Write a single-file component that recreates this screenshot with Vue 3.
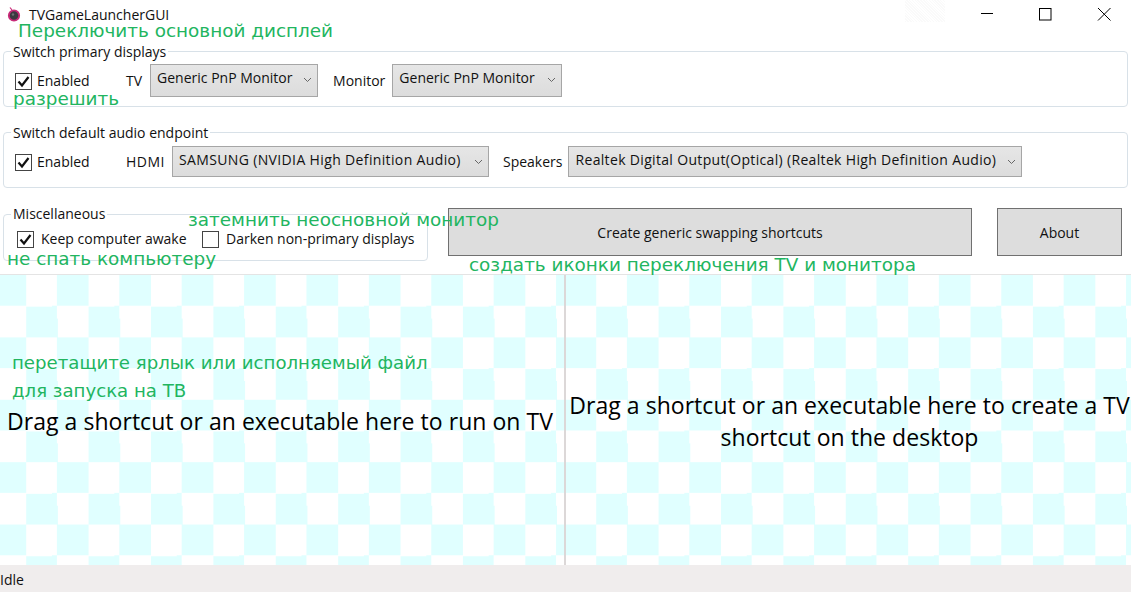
<script setup>
const groups = [
  {
    title: 'Switch primary displays',
    cls: 'g1',
    left: 'TV', leftVal: 'Generic PnP Monitor', leftCls: 'c1',
    right: 'Monitor', rightVal: 'Generic PnP Monitor', rightCls: 'c2'
  },
  {
    title: 'Switch default audio endpoint',
    cls: 'g2',
    left: 'HDMI', leftVal: 'SAMSUNG (NVIDIA High Definition Audio)', leftCls: 'c3',
    right: 'Speakers', rightVal: 'Realtek Digital Output(Optical) (Realtek High Definition Audio)', rightCls: 'c4'
  }
]
const notes = [
  { t: 'Переключить основной дисплей', c: 'n1' },
  { t: 'разрешить', c: 'n2' },
  { t: 'затемнить неосновной монитор', c: 'n3' },
  { t: 'не спать компьютеру', c: 'n4' },
  { t: 'создать иконки переключения TV и монитора', c: 'n5' },
  { t: 'перетащите ярлык или исполняемый файл', c: 'n6' },
  { t: 'для запуска на ТВ', c: 'n7' }
]
</script>

<template>
  <div class="win">
    <header class="title">
      <svg class="appicon" width="16" height="16" viewBox="0 0 16 16">
        <circle cx="8" cy="8.5" r="5.2" fill="#3c3a40" stroke="#c92a78" stroke-width="1.8" />
        <circle cx="7" cy="7.5" r="1.2" fill="#6e6e72" />
        <path d="M4 0.5l2 2.5" stroke="#c92a78" stroke-width="1.2" />
      </svg>
      <span class="apptitle">TVGameLauncherGUI</span>
      <span class="ghost"></span>
      <div class="caps">
        <svg width="46" height="30" viewBox="0 0 46 30"><path d="M16 13.5h12" stroke="#000" /></svg>
        <svg width="46" height="30" viewBox="0 0 46 30"><rect x="16.5" y="8.5" width="11.5" height="11.5" fill="none" stroke="#000" /></svg>
        <svg width="46" height="30" viewBox="0 0 46 30"><path d="M17 8l12.5 12.5M29.5 8L17 20.5" stroke="#000" /></svg>
      </div>
    </header>

    <section v-for="g in groups" :key="g.title" class="group" :class="g.cls">
      <span class="legend">{{ g.title }}</span>
      <label class="chk en"><span class="box on"><svg width="13" height="13" viewBox="0 0 13 13"><path d="M1.5 6.5l3.5 4L11.5 2" fill="none" stroke="#111" stroke-width="2.2" /></svg></span>Enabled</label>
      <span class="lab l-left">{{ g.left }}</span>
      <div class="combo" :class="g.leftCls"><span>{{ g.leftVal }}</span><svg width="9" height="6" viewBox="0 0 9 6"><path d="M1 1l3.5 3.5L8 1" fill="none" stroke="#666" /></svg></div>
      <span class="lab l-right">{{ g.right }}</span>
      <div class="combo" :class="g.rightCls"><span>{{ g.rightVal }}</span><svg width="9" height="6" viewBox="0 0 9 6"><path d="M1 1l3.5 3.5L8 1" fill="none" stroke="#666" /></svg></div>
    </section>

    <div class="miscrow">
      <section class="group g3">
        <span class="legend">Miscellaneous</span>
        <label class="chk"><span class="box on"><svg width="13" height="13" viewBox="0 0 13 13"><path d="M1.5 6.5l3.5 4L11.5 2" fill="none" stroke="#111" stroke-width="2.2" /></svg></span>Keep computer awake</label>
        <label class="chk"><span class="box"></span>Darken non-primary displays</label>
      </section>
      <button class="btn create">Create generic swapping shortcuts</button>
      <button class="btn about">About</button>
    </div>

    <div class="drops">
      <div class="drop dl"><p>Drag a shortcut or an executable here to run on TV</p></div>
      <div class="split"></div>
      <div class="drop dr"><p>Drag a shortcut or an executable here to create a TV shortcut on the desktop</p></div>
    </div>

    <footer class="status">Idle</footer>

    <span v-for="n in notes" :key="n.c" class="note" :class="n.c">{{ n.t }}</span>
  </div>
</template>

<style>
html, body { margin: 0; background: #fff; overflow: hidden; }
</style>

<style scoped>
.win {
  position: relative;
  width: 1131px;
  height: 592px;
  background: #fff;
  display: flex;
  flex-direction: column;
  font-family: "Open Sans", "Noto Sans", sans-serif;
  font-size: 14px;
  color: #111;
  overflow: hidden;
}
.title {
  height: 30px;
  display: flex;
  align-items: flex-start;
  flex: none;
}
.appicon { margin: 7px 0 0 6px; }
.apptitle { margin: 7px 0 0 7px; font-size: 14px; line-height: 16px; }
.ghost {
  position: absolute;
  left: 905px;
  top: 0;
  width: 40px;
  height: 22px;
  background: repeating-linear-gradient(45deg, #fafafa 0 1px, #fff 1px 2px);
}
.caps { margin-left: auto; margin-right: 4px; display: flex; height: 30px; }
.caps svg { display: block; margin-left: 12px; }

.group {
  position: relative;
  border: 1px solid #d8e1e8;
  border-radius: 4px;
  box-sizing: border-box;
  flex: none;
}
.g1 { margin: 21px 3px 0 3px; height: 56px; }
.g2 { margin: 25px 3px 0 3px; height: 56px; }
.g1, .g2 { display: flex; align-items: flex-start; }
.g3 { width: 425px; height: 47px; margin: 26px 0 0 3px; display: flex; align-items: flex-start; }
.legend {
  position: absolute;
  left: 7px;
  top: -9px;
  padding: 0 2px;
  background: #fff;
  line-height: 18px;
}
.g3 .legend { top: -10px; }
.chk { display: flex; align-items: center; line-height: 18px; white-space: nowrap; }
.box {
  box-sizing: border-box;
  width: 17px;
  height: 17px;
  border: 1px solid #444;
  background: #fff;
  display: flex;
  align-items: center;
  justify-content: center;
  margin-right: 5px;
  flex: none;
}
.g1 .en, .g2 .en { margin: 20px 0 0 11px; width: 111px; }
.g3 .chk { margin-top: 15px; }
.g3 .box { margin-right: 7px; }
.g3 .chk:nth-of-type(1) { margin-left: 13px; width: 185px; }
.lab { line-height: 18px; margin-top: 20px; white-space: nowrap; }
.g2 .l-left { letter-spacing: 0.5px; }
.combo {
  box-sizing: border-box;
  height: 33px;
  margin-top: 12px;
  background: linear-gradient(#e6e6e6, #dcdcdc);
  border: 1px solid #a6a6a6;
  display: flex;
  align-items: flex-start;
  justify-content: space-between;
  padding: 4px 5px 0 6px;
  line-height: 18px;
  white-space: nowrap;
}
.combo svg { margin-top: 8px; flex: none; }
.c1 { width: 168px; margin-left: 8px; }
.c2 { width: 170px; margin-left: 7px; }
.c3, .c4 { height: 31px; margin-top: 13px; letter-spacing: 0.36px; }
.c3 { width: 317px; margin-left: 7px; }
.c4 { width: 454px; margin-left: 6px; letter-spacing: 0.33px; }
.l-right { margin-left: 15px; }
.g2 .l-right { margin-left: 14px; }

.miscrow { display: flex; align-items: flex-start; height: 86px; flex: none; }
.btn {
  box-sizing: border-box;
  background: #dddddd;
  border: 1px solid #707070;
  font: inherit;
  color: #111;
  height: 48px;
  margin-top: 20px;
  padding: 0;
}
.create { width: 524px; margin-left: 20px; }
.about { width: 125px; margin-left: 25px; }

.drops {
  display: flex;
  height: 291px;
  flex: none;
  border-top: 1px solid #e4e4e4;
  box-sizing: border-box;
}
.drop {
  --c: #e0ffff;
  background-image: conic-gradient(var(--c) 25%, #fff 0 50%, var(--c) 0 75%, #fff 0);
  background-size: 62.4px 62.4px;
  display: flex;
  align-items: center;
  justify-content: center;
  text-align: center;
  font-size: 23px;
  line-height: 32px;
  letter-spacing: 0.04px;
  color: #000;
  padding-top: 1px;
  box-sizing: border-box;
}
.drop p { margin: 0; }
.dl { width: 564px; background-position: -36.2px 0; flex: none; padding-right: 4px; }
.dr { flex: 1; background-position: -32.2px 0; padding-left: 2px; }
.split { width: 2px; background: #dcd8d8; flex: none; }
.status {
  flex: none;
  height: 27px;
  box-sizing: border-box;
  padding-top: 2px;
  background: #f0eded;
  font-size: 14px;
  line-height: 25px;
}
.note {
  position: absolute;
  font-family: "DejaVu Sans", sans-serif;
  font-size: 18.4px;
  line-height: 16px;
  color: #22b55f;
  white-space: nowrap;
}
.n1 { left: 18px; top: 23px; }
.n2 { left: 13px; top: 91px; }
.n3 { left: 188px; top: 212px; }
.n4 { left: 7px; top: 251px; }
.n5 { left: 469px; top: 257px; }
.n6 { left: 12px; top: 355px; font-size: 18.15px; }
.n7 { left: 12px; top: 383px; font-size: 18.15px; }
</style>
